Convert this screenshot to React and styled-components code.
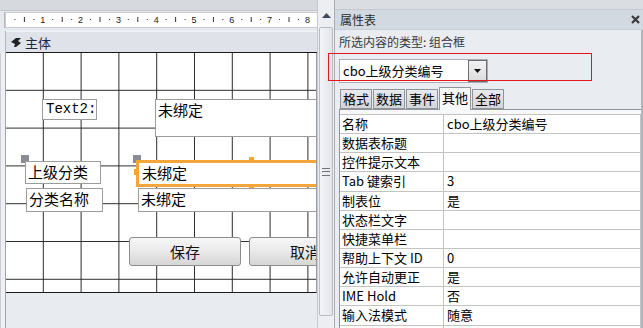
import React from "react";
import styled, { createGlobalStyle } from "styled-components";

const GlobalStyle = createGlobalStyle`
  html, body { margin: 0; padding: 0; background: #e8ebf0; }
  body { font-family: "Noto Sans CJK SC", "Noto Sans", sans-serif; }
`;

const CM = 37.8;
const cjk = `"Noto Sans CJK SC", "Noto Sans", sans-serif`;

const properties = [
  ["名称", "cbo上级分类编号"],
  ["数据表标题", ""],
  ["控件提示文本", ""],
  ["Tab 键索引", "3"],
  ["制表位", "是"],
  ["状态栏文字", ""],
  ["快捷菜单栏", ""],
  ["帮助上下文 ID", "0"],
  ["允许自动更正", "是"],
  ["IME Hold", "否"],
  ["输入法模式", "随意"],
  ["", ""],
];

const tabs = ["格式", "数据", "事件", "其他", "全部"];

const Page = styled.div`
  position: relative;
  display: flex;
  width: 643px;
  height: 328px;
  overflow: hidden;
  background: #e8ebf0;
`;

/* ---------- design view ---------- */

const DesignPane = styled.div`
  width: 317px;
  flex-shrink: 0;
  display: flex;
  flex-direction: column;
  & > * { flex-shrink: 0; }
`;

const TopBand = styled.div`
  height: 10px;
  background: #d6d9de;
  border-bottom: 1px solid #c2c5cb;
`;

const RulerRow = styled.div`
  display: flex;
  height: 16px;
  padding: 1px 0 2px;
  background: #e6e9ee;
`;

const Corner = styled.div`
  width: 5px;
  border-right: 1px solid #b5b8be;
`;

const Ruler = styled.div`
  flex: 1;
  background: #fff;
  border: 1px solid #c9ccd1;
  border-right: none;
  svg { display: block; }
`;

const SectionRow = styled.div`
  display: flex;
  height: 22px;
  margin-top: 1px;
`;

const SectionBar = styled.div`
  flex: 1;
  display: flex;
  align-items: center;
  gap: 3px;
  padding-left: 4px;
  background: #dfe2e8;
  border-top: 1px solid #f4f5f7;
  border-bottom: 1px solid #1a1a1a;
  font-family: ${cjk};
  font-size: 13px;
  color: #1e2a3c;
`;

const BodyRow = styled.div`
  display: flex;
  height: 240px;
`;

const SideRuler = styled.div`
  width: 6px;
  box-sizing: border-box;
  background: #eef0f3;
  border-left: 1px solid #c9ccd1;
  border-right: 1px solid #9fa3aa;
`;

const Canvas = styled.div`
  position: relative;
  width: 310px;
  overflow: hidden;
  background-color: #fff;
  background-image:
    linear-gradient(to right, transparent 36.8px, #2b2b2b 36.8px),
    linear-gradient(to bottom, transparent 36.8px, #2b2b2b 36.8px);
  background-size: ${CM}px ${CM}px;
  border-right: 1px solid #9a9ea5;
  border-bottom: 1px solid #1a1a1a;
`;

const Below = styled.div`
  flex: 1 1 auto !important;
  display: flex;
`;

const Control = styled.div`
  position: absolute;
  left: ${(p) => p.$x}px;
  top: ${(p) => p.$y}px;
  width: ${(p) => p.$w}px;
  height: ${(p) => p.$h}px;
  box-sizing: border-box;
  background: #fff;
  border: 1px solid #9c9c9c;
  font-family: ${(p) => (p.$mono ? `"Liberation Mono", monospace` : cjk)};
  font-size: ${(p) => (p.$mono ? 14 : 15)}px;
  line-height: ${(p) => (p.$mono ? 18 : 20)}px;
  padding-left: ${(p) => (p.$mono ? 3 : 2)}px;
  color: #000;
  white-space: nowrap;
`;

const Selected = styled(Control)`
  border: 3px solid #f5a53a;
  border-right: none;
  line-height: 20px;
  padding-left: 3px;
`;

const Handle = styled.div`
  position: absolute;
  left: ${(p) => p.$x}px;
  top: ${(p) => p.$y}px;
  width: ${(p) => p.$w || 8}px;
  height: ${(p) => p.$h || 8}px;
  background: ${(p) => (p.$orange ? "#f5a53a" : "#8a8d93")};
`;

const FormButton = styled.div`
  position: absolute;
  left: ${(p) => p.$x}px;
  top: ${(p) => p.$y}px;
  width: 112px;
  height: 29px;
  box-sizing: border-box;
  border: 1px solid #8d8d8d;
  border-radius: 3px;
  background: linear-gradient(#f7f7f7, #e9e9e9 50%, #d6d6d6);
  font-family: ${cjk};
  font-size: 15px;
  line-height: 27px;
  text-align: center;
  color: #111;
  white-space: nowrap;
`;

/* ---------- splitter scroll bar ---------- */

const Scroller = styled.div`
  width: 17px;
  flex-shrink: 0;
  display: flex;
  flex-direction: column;
  background: #eceef1;
  border-left: 1px solid #c6c9ce;
  box-sizing: border-box;
  & > * { flex-shrink: 0; }
`;

const ArrowBox = styled.div`
  height: 27px;
  display: flex;
  align-items: flex-start;
  justify-content: center;
  padding-top: 13px;
  box-sizing: border-box;
`;

const Thumb = styled.div`
  height: 289px;
  margin: 0 1px;
  display: flex;
  align-items: center;
  justify-content: center;
  background: linear-gradient(to right, #f3f4f6, #e2e4e8);
  border: 1px solid #b9bcc2;
  border-radius: 2px;
  box-sizing: border-box;
`;

const Grip = styled.div`
  width: 8px;
  height: 6px;
  border-top: 1px solid #707378;
  border-bottom: 1px solid #707378;
  position: relative;
  &::after {
    content: "";
    position: absolute;
    left: 0;
    right: 0;
    top: 2px;
    border-top: 1px solid #707378;
  }
`;

/* ---------- property sheet ---------- */

const Sheet = styled.div`
  flex: 1;
  display: flex;
  flex-direction: column;
  border-left: 1px solid #a9adb3;
  & > * { flex-shrink: 0; }
`;

const SheetTop = styled.div`
  height: 9px;
  background: #dadde2;
  border-bottom: 1px solid #c5c8ce;
`;

const TitleBar = styled.div`
  height: 19px;
  display: flex;
  align-items: center;
  justify-content: space-between;
  padding: 0 3px 0 5px;
  background: #d3d9e1;
  border-bottom: 1px solid #c8ced6;
  font-family: ${cjk};
  font-size: 12px;
  color: #2b2b2b;
`;

const SheetBody = styled.div`
  flex: 1 1 auto !important;
  min-height: 0;
  display: flex;
  flex-direction: column;
  padding-left: 4px;
  background: #e9ecf1;
  border-right: 2px solid #b2b5ba;
  & > * { flex-shrink: 0; }
`;

const TypeLine = styled.div`
  height: 24px;
  padding-top: 1px;
  box-sizing: border-box;
  font-family: ${cjk};
  font-size: 12px;
  line-height: 22px;
  color: #3a3a3a;
`;

const ComboRow = styled.div`
  height: 33px;
  display: flex;
  align-items: center;
`;

const Combo = styled.div`
  width: 149px;
  height: 24px;
  display: flex;
  box-sizing: border-box;
  background: #fff;
  border: 1px solid #a9acb2;
`;

const ComboText = styled.div`
  flex: 1;
  padding-left: 3px;
  font-family: ${cjk};
  font-size: 13px;
  line-height: 22px;
  color: #000;
`;

const DropButton = styled.div`
  width: 17px;
  display: flex;
  align-items: center;
  justify-content: center;
  background: linear-gradient(#f2f2f2, #dcdcdc);
  border: 1px solid #6e6e6e;
`;

const TabStrip = styled.div`
  display: flex;
  align-items: flex-end;
  height: 22px;
  padding-left: 1px;
  gap: 1px;
`;

const Tab = styled.div`
  height: ${(p) => (p.$active ? 23 : 20)}px;
  margin-bottom: ${(p) => (p.$active ? -1 : 0)}px;
  padding: 0 2px;
  box-sizing: border-box;
  border: 1px solid #8f939a;
  border-bottom: ${(p) => (p.$active ? "none" : "1px solid #8f939a")};
  background: ${(p) =>
    p.$active ? "#f7f8f9" : "linear-gradient(#e9eaec, #d3d5d8)"};
  font-family: ${cjk};
  font-size: 13px;
  line-height: ${(p) => (p.$active ? 20 : 18)}px;
  color: #000;
  position: relative;
`;

const PropPane = styled.div`
  flex: 1 1 auto !important;
  min-height: 0;
  overflow: hidden;
  padding-top: 4px;
  border-top: 1px solid #8f939a;
  border-left: 1px solid #8f939a;
  background: #f7f8f9;
`;

const PropGrid = styled.div`
  display: grid;
  grid-template-columns: 104px 1fr;
  background: #fff;
  border-top: 1px solid #c3c3c3;
`;

const Cell = styled.div`
  height: 19.15px;
  box-sizing: border-box;
  padding-left: ${(p) => (p.$value ? 3 : 2)}px;
  border-bottom: 1px solid #c3c3c3;
  border-right: 1px solid #c3c3c3;
  font-family: ${cjk};
  font-size: 13px;
  line-height: 18px;
  color: #000;
  white-space: nowrap;
`;

const Annotation = styled.div`
  position: absolute;
  left: 328px;
  top: 53px;
  width: 264px;
  height: 28px;
  box-sizing: border-box;
  border: 1px solid #e8141b;
  pointer-events: none;
`;

function RulerTicks() {
  const marks = [];
  for (let k = 0; k < 9; k++) {
    const base = k * CM;
    [0.25, 0.5, 0.75].forEach((f, i) => {
      const x = base + f * CM - 1;
      if (i === 1) marks.push(<rect key={`l${k}`} x={x} y={4} width={1} height={5} fill="#333" />);
      else marks.push(<rect key={`d${k}${i}`} x={x} y={6} width={1} height={1} fill="#333" />);
    });
    if (k < 8)
      marks.push(
        <text key={`n${k}`} x={base + CM - 1} y={10} fontSize="9" textAnchor="middle" fontFamily="Liberation Sans, sans-serif" fill="#222">
          {k + 1}
        </text>
      );
  }
  return (
    <svg width="311" height="13">
      {marks}
    </svg>
  );
}

export default function App() {
  return (
    <>
      <GlobalStyle />
      <Page>
        <DesignPane>
          <TopBand />
          <RulerRow>
            <Corner />
            <Ruler>
              <RulerTicks />
            </Ruler>
          </RulerRow>
          <SectionRow>
            <Corner />
            <SectionBar>
              <svg width="12" height="11" viewBox="0 0 12 11">
                <path d="M1 5 L6 1 L11 1 L8 4 L11 6 L6 10 L4 10 L5 7 Z" fill="#222" />
              </svg>
              主体
            </SectionBar>
          </SectionRow>
          <BodyRow>
            <SideRuler />
            <Canvas>
              <Control $x={36} $y={46} $w={55} $h={21} $mono>
                Text2:
              </Control>
              <Control $x={149} $y={46} $w={170} $h={38}>
                未绑定
              </Control>
              <Handle $x={15} $y={102} />
              <Handle $x={127} $y={102} />
              <Control $x={19} $y={108} $w={76} $h={23}>
                上级分类
              </Control>
              <Selected $x={130} $y={107} $w={190} $h={27}>
                未绑定
              </Selected>
              <Handle $orange $x={243} $y={104} $w={5} $h={4} />
              <Handle $orange $x={243} $y={132} $w={5} $h={4} />
              <Handle $orange $x={128} $y={116} $w={4} $h={6} />
              <Control $x={20} $y={135} $w={77} $h={24}>
                分类名称
              </Control>
              <Control $x={132} $y={135} $w={190} $h={24}>
                未绑定
              </Control>
              <FormButton $x={123} $y={184}>保存</FormButton>
              <FormButton $x={243} $y={184}>取消</FormButton>
            </Canvas>
          </BodyRow>
          <Below>
            <SideRuler />
          </Below>
        </DesignPane>

        <Scroller>
          <ArrowBox>
            <svg width="9" height="6" viewBox="0 0 9 6">
              <path d="M0 5 L4.5 0 L9 5 Z" fill="#3c4a5e" />
            </svg>
          </ArrowBox>
          <Thumb>
            <Grip />
          </Thumb>
        </Scroller>

        <Sheet>
          <SheetTop />
          <TitleBar>
            <span>属性表</span>
            <svg width="9" height="9" viewBox="0 0 9 9">
              <path d="M1 1 L8 8 M8 1 L1 8" stroke="#3a3a3a" strokeWidth="2.2" />
            </svg>
          </TitleBar>
          <SheetBody>
            <TypeLine>所选内容的类型:&nbsp;组合框</TypeLine>
            <ComboRow>
              <Combo>
                <ComboText>cbo上级分类编号</ComboText>
                <DropButton>
                  <svg width="7" height="4" viewBox="0 0 7 4">
                    <path d="M0 0 L7 0 L3.5 4 Z" fill="#111" />
                  </svg>
                </DropButton>
              </Combo>
            </ComboRow>
            <TabStrip>
              {tabs.map((t) => (
                <Tab key={t} $active={t === "其他"}>
                  {t}
                </Tab>
              ))}
            </TabStrip>
            <PropPane>
              <PropGrid>
                {properties.map(([name, value], i) => (
                  <React.Fragment key={i}>
                    <Cell>{name}</Cell>
                    <Cell $value>{value}</Cell>
                  </React.Fragment>
                ))}
              </PropGrid>
            </PropPane>
          </SheetBody>
        </Sheet>
        <Annotation />
      </Page>
    </>
  );
}
